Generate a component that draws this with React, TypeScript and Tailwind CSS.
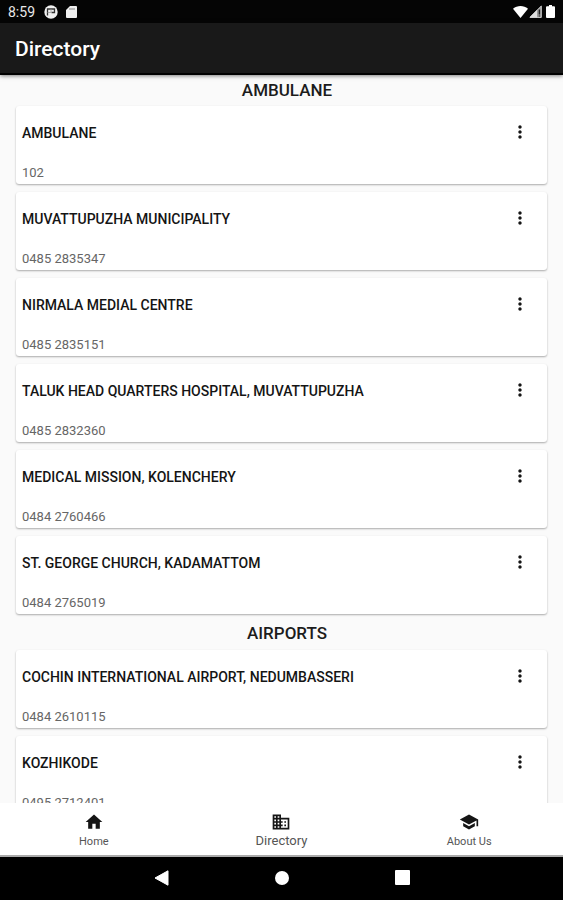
import React from 'react';
import { MdBusiness, MdHome, MdMoreVert, MdSchool } from 'react-icons/md';

type Contact = { name: string; phone: string };
type Section = { title: string; contacts: Contact[] };

const sections: Section[] = [
  {
    title: 'AMBULANE',
    contacts: [
      { name: 'AMBULANE', phone: '102' },
      { name: 'MUVATTUPUZHA MUNICIPALITY', phone: '0485 2835347' },
      { name: 'NIRMALA MEDIAL CENTRE', phone: '0485 2835151' },
      { name: 'TALUK HEAD QUARTERS HOSPITAL, MUVATTUPUZHA', phone: '0485 2832360' },
      { name: 'MEDICAL MISSION, KOLENCHERY', phone: '0484 2760466' },
      { name: 'ST. GEORGE CHURCH, KADAMATTOM', phone: '0484 2765019' },
    ],
  },
  {
    title: 'AIRPORTS',
    contacts: [
      { name: 'COCHIN INTERNATIONAL AIRPORT, NEDUMBASSERI', phone: '0484 2610115' },
      { name: 'KOZHIKODE', phone: '0495 2712401' },
    ],
  },
];

function StatusBar() {
  return (
    <div className="flex h-[23px] shrink-0 items-center justify-between bg-[#050505] px-2 text-[#e8e8e8]">
      <div className="flex items-center">
        <span className="w-9 text-[14px] leading-4">8:59</span>
        <svg className="h-[14px] w-[14px]" viewBox="0 0 14 14" aria-hidden="true">
          <circle cx="7" cy="7" r="6.7" fill="#f0f0f0" />
          <path d="M3.500 10.500V4h7v3.500H7.500" fill="none" stroke="#333" strokeWidth="1.300" />
          <path d="M7 4v3.500H3.500" fill="none" stroke="#999" strokeWidth="0.800" />
        </svg>
        <svg className="ml-2 h-3 w-[11px]" viewBox="0 0 11 12" aria-hidden="true">
          <path d="M4 0h6a1 1 0 0 1 1 1v10a1 1 0 0 1-1 1H1a1 1 0 0 1-1-1V4z" fill="#f0f0f0" />
          <path d="M4 2v2M6 2v2M8 2v2" stroke="#777" strokeWidth="0.9" />
        </svg>
      </div>
      <div className="flex items-center gap-px">
        <svg className="h-3 w-[15px]" viewBox="0 0 15 12" aria-hidden="true">
          <path d="M0 2.8C4.2-.9 10.800-.9 15 2.800L7.500 12z" fill="#fff" />
        </svg>
        <svg className="h-[13px] w-[13px]" viewBox="0 0 13 13" aria-hidden="true">
          <path d="M12.300 1v11.400H.9z" fill="#999" stroke="#ddd" strokeWidth="0.9" />
          <path d="M8 5v7.500H.5z" fill="#ddd" />
          <path d="M10.400 4.500v5M10.400 10.400v1.200" stroke="#222" strokeWidth="1.400" />
        </svg>
        <svg className="ml-[3px] h-[13px] w-[9px]" viewBox="0 0 9 13" aria-hidden="true">
          <path d="M3 0h3v1.200h2a1 1 0 0 1 1 1V12a1 1 0 0 1-1 1H1a1 1 0 0 1-1-1V2.200a1 1 0 0 1 1-1h2z" fill="#fff" />
        </svg>
      </div>
    </div>
  );
}

function ContactCard({ name, phone }: Contact) {
  return (
    <li className="flex h-[78px] justify-between rounded-[3px] bg-white pl-1.5 pr-[17px] shadow-[0_1px_2px_rgba(0,0,0,0.32)]">
      <div className="pt-[18px]">
        <h3 className="text-[14px] font-medium leading-[18px] text-[#151515]">{name}</h3>
        <p className="mt-[22px] text-[13px] leading-[18px] text-[#666]">{phone}</p>
      </div>
      <button type="button" aria-label={`Options for ${name}`} className="mt-[15px] h-[22px] w-5 shrink-0">
        <MdMoreVert className="h-[22px] w-5 text-[#151515]" />
      </button>
    </li>
  );
}

export default function App() {
  return (
    <div className="flex h-screen flex-col overflow-hidden bg-[#fafafa] font-[Roboto,sans-serif]">
      <StatusBar />
      <header className="z-10 flex h-[52px] shrink-0 items-center border-b-2 border-black bg-[#191919] px-[15px] pt-0.5 shadow-[0_1px_4px_rgba(0,0,0,0.5)]">
        <h1 className="text-[21px] font-medium leading-6 text-white">Directory</h1>
      </header>
      <main className="min-h-0 flex-1 overflow-hidden px-4">
        {sections.map((section, index) => (
          <section key={section.title}>
            <h2
              className={`pl-[11px] text-center text-[17px] font-medium leading-5 text-[#1c1c1c] ${
                index === 0 ? 'pt-[5px] pb-1.5' : 'pt-[9px] pb-[7px]'
              }`}
            >
              {section.title}
            </h2>
            <ul className="flex flex-col gap-2">
              {section.contacts.map((contact) => (
                <ContactCard key={contact.name} {...contact} />
              ))}
            </ul>
          </section>
        ))}
      </main>
      <nav className="grid h-[54px] shrink-0 grid-cols-3 border-b-2 border-[#aaa] bg-white text-[#151515]">
        <a href="#home" className="flex flex-col items-center pt-[9px]">
          <MdHome className="h-5 w-5" />
          <span className="text-[11px] leading-5 text-[#555]">Home</span>
        </a>
        <a href="#directory" aria-current="page" className="flex flex-col items-center pt-[9px]">
          <MdBusiness className="h-5 w-5" />
          <span className="text-[13px] leading-[18px] text-[#555]">Directory</span>
        </a>
        <a href="#about" className="flex flex-col items-center pt-[9px]">
          <MdSchool className="h-5 w-5" />
          <span className="text-[11px] leading-5 text-[#555]">About Us</span>
        </a>
      </nav>
      <div className="flex h-[43px] shrink-0 items-center justify-center gap-[106px] bg-black pb-0.5">
        <button type="button" aria-label="Back">
          <svg className="h-4 w-[15px]" viewBox="0 0 15 16" aria-hidden="true">
            <path d="M14 .8v14.400L1 8z" fill="#fff" stroke="#fff" strokeWidth="1" strokeLinejoin="round" />
          </svg>
        </button>
        <button type="button" aria-label="Home screen" className="h-[14px] w-[14px] rounded-full bg-white" />
        <button type="button" aria-label="Recent apps" className="h-[15px] w-[15px] rounded-[1px] bg-white" />
      </div>
    </div>
  );
}
